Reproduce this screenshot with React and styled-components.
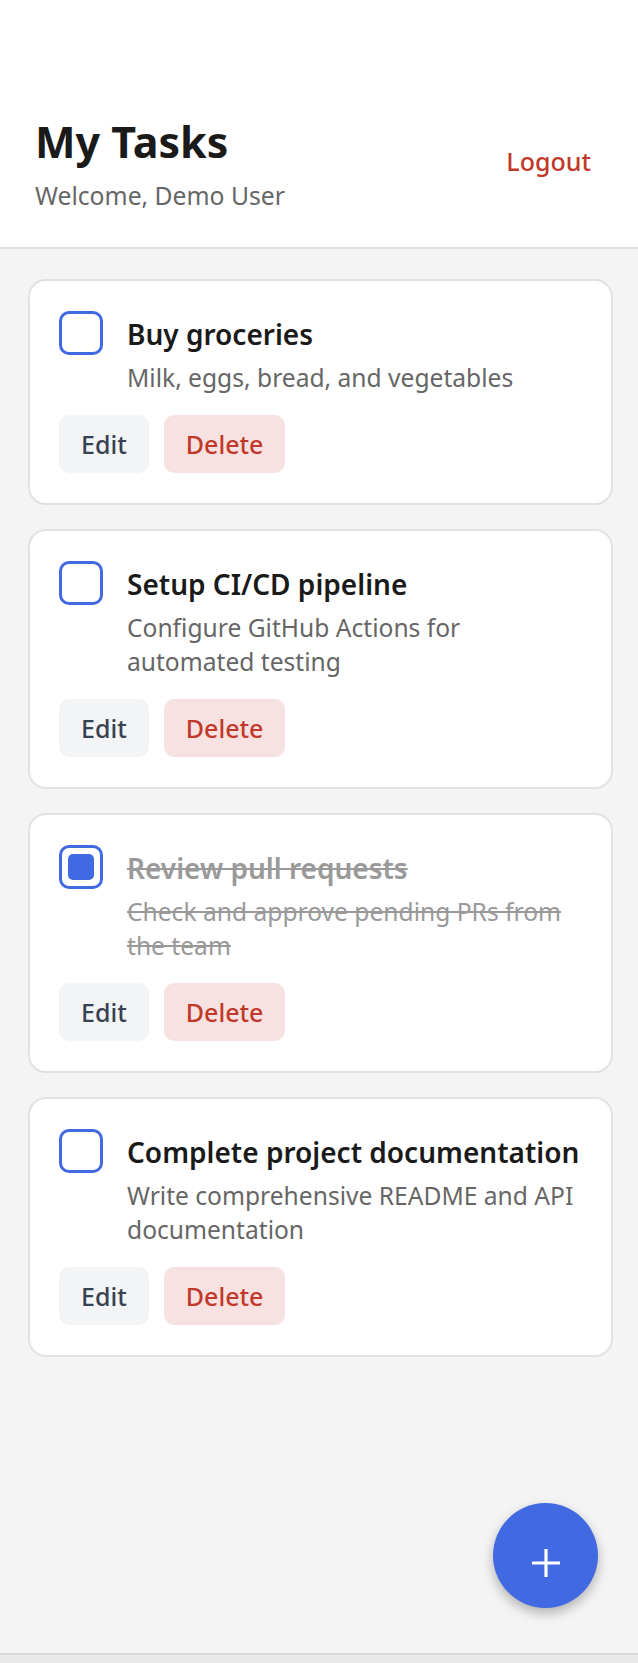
import React from "react";
import styled, { createGlobalStyle } from "styled-components";

const Global = createGlobalStyle`
  html, body { margin: 0; padding: 0; }
  body {
    font-family: "Noto Sans", "Open Sans", sans-serif;
    background: #f4f4f4;
  }
  * { box-sizing: border-box; }
`;

const Screen = styled.div`
  position: relative;
  min-height: 1663px;
  display: flex;
  flex-direction: column;
  background: #f4f4f4;
`;

const Header = styled.header`
  display: flex;
  align-items: center;
  justify-content: space-between;
  background: #ffffff;
  padding: 115px 35px 33px 35px;
  border-bottom: 2px solid #e0e0e0;
`;

const HeaderText = styled.div`
  display: flex;
  flex-direction: column;
`;

const Title = styled.h1`
  margin: 0;
  font-size: 43px;
  line-height: 53px;
  font-weight: 700;
  color: #1a1a1a;
`;

const Welcome = styled.p`
  margin: 10px 0 0;
  font-size: 24.7px;
  line-height: 36px;
  color: #666666;
`;

const LogoutButton = styled.button`
  border: none;
  background: transparent;
  padding: 8px 12px;
  margin-bottom: 8px;
  font-family: inherit;
  font-size: 25px;
  line-height: 36px;
  font-weight: 500;
  color: #c0392b;
  cursor: pointer;
`;

const List = styled.main`
  flex: 1;
  display: flex;
  flex-direction: column;
  gap: 24px;
  padding: 30px 25px 30px 28px;
`;

const Card = styled.div`
  background: #ffffff;
  border: 2px solid #e2e2e2;
  border-radius: 18px;
  padding: 30px 20px 30px 29px;
`;

const Row = styled.div`
  display: flex;
  align-items: flex-start;
  gap: 24px;
`;

const Check = styled.div`
  flex: none;
  width: 44px;
  height: 44px;
  border: 3px solid #4169e1;
  border-radius: 10px;
  display: flex;
  align-items: center;
  justify-content: center;
  background: #ffffff;
`;

const CheckFill = styled.div`
  width: 26px;
  height: 26px;
  border-radius: 5px;
  background: #4169e1;
`;

const Content = styled.div`
  flex: 1;
  min-width: 0;
  padding-top: 4px;
`;

const TaskTitle = styled.div`
  font-size: 28px;
  line-height: 39px;
  font-weight: 600;
  color: ${(p) => (p.$done ? "#999999" : "#1a1a1a")};
  text-decoration: ${(p) => (p.$done ? "line-through" : "none")};
`;

const TaskDesc = styled.div`
  margin-top: 7px;
  font-size: 24.6px;
  line-height: 34px;
  color: ${(p) => (p.$done ? "#999999" : "#666666")};
  text-decoration: ${(p) => (p.$done ? "line-through" : "none")};
`;

const Actions = styled.div`
  display: flex;
  gap: 15px;
  margin-top: 20px;
`;

const ActionButton = styled.button`
  border: none;
  border-radius: 10px;
  padding: 10px 22px;
  font-family: inherit;
  font-size: 25px;
  line-height: 38px;
  font-weight: 500;
  cursor: pointer;
  background: ${(p) => (p.$danger ? "#f8e1e1" : "#f3f4f6")};
  color: ${(p) => (p.$danger ? "#c0392b" : "#374151")};
`;

const Fab = styled.button`
  position: absolute;
  right: 40px;
  bottom: 55px;
  width: 105px;
  height: 105px;
  border-radius: 50%;
  border: none;
  background: #4169e1;
  box-shadow: 0 5px 12px rgba(0, 0, 0, 0.28);
  display: flex;
  align-items: center;
  justify-content: center;
  cursor: pointer;
  padding: 0;
`;

const PlusIcon = styled.svg`
  margin-top: 14px;
`;

const BottomBar = styled.div`
  height: 10px;
  border-top: 2px solid #d9d9d9;
  background: #e8e8e8;
`;

const tasks = [
  { id: 1, title: "Buy groceries", desc: "Milk, eggs, bread, and vegetables", done: false },
  { id: 2, title: "Setup CI/CD pipeline", desc: "Configure GitHub Actions for automated testing", done: false },
  { id: 3, title: "Review pull requests", desc: "Check and approve pending PRs from the team", done: true },
  { id: 4, title: "Complete project documentation", desc: "Write comprehensive README and API documentation", done: false },
];

export default function App() {
  return (
    <>
      <Global />
      <Screen>
        <Header>
          <HeaderText>
            <Title>My Tasks</Title>
            <Welcome>Welcome, Demo User</Welcome>
          </HeaderText>
          <LogoutButton>Logout</LogoutButton>
        </Header>
        <List>
          {tasks.map((t) => (
            <Card key={t.id}>
              <Row>
                <Check>{t.done && <CheckFill />}</Check>
                <Content>
                  <TaskTitle $done={t.done}>{t.title}</TaskTitle>
                  <TaskDesc $done={t.done}>{t.desc}</TaskDesc>
                </Content>
              </Row>
              <Actions>
                <ActionButton>Edit</ActionButton>
                <ActionButton $danger>Delete</ActionButton>
              </Actions>
            </Card>
          ))}
        </List>
        <BottomBar />
        <Fab aria-label="Add task">
          <PlusIcon width="28" height="28" viewBox="0 0 28 28">
            <path d="M14 0v28M0 14h28" stroke="#ffffff" strokeWidth="3.2" />
          </PlusIcon>
        </Fab>
      </Screen>
    </>
  );
}
